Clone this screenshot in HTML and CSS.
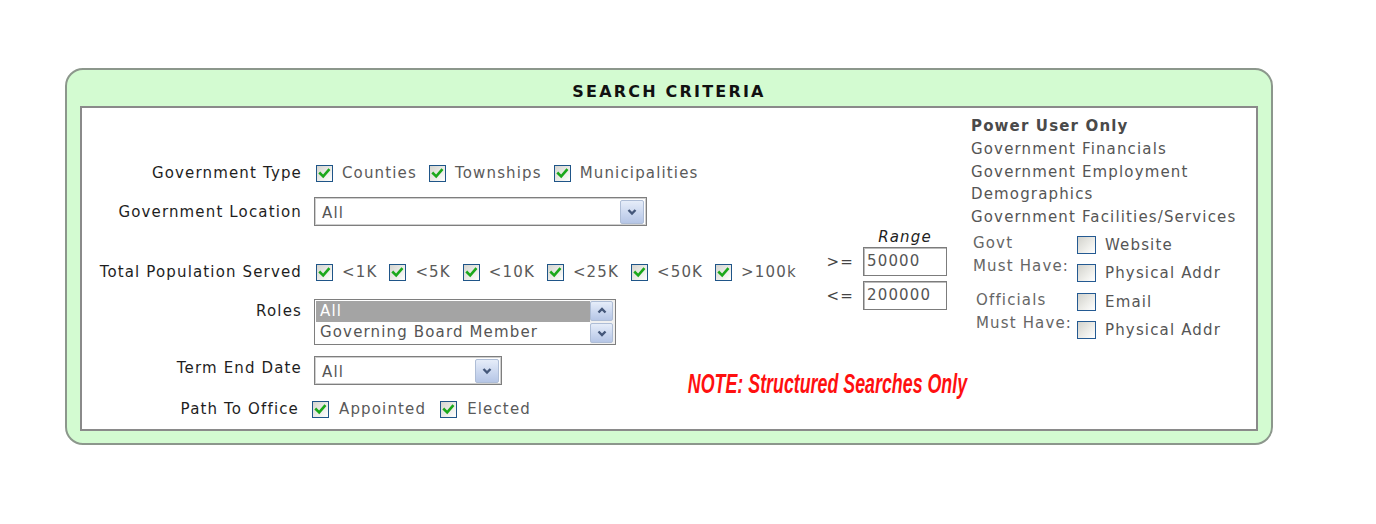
FILE: index.html
```html
<!DOCTYPE html>
<html>
<head>
<meta charset="utf-8">
<title>Search Criteria</title>
<link rel="stylesheet" href="styles.css">
</head>
<body>
<div class="panel">
  <div class="title">SEARCH CRITERIA</div>
  <div class="inner">
    <div class="main">
      <div class="form">
        <div class="row r1">
          <div class="lbl">Government Type</div>
          <div class="opts">
            <span class="opt"><span class="cb"><svg viewBox="0 0 15 15"><path d="M3.2 7.4 L6.2 10.4 L11.6 4.2"/></svg></span>Counties</span>
            <span class="opt"><span class="cb"><svg viewBox="0 0 15 15"><path d="M3.2 7.4 L6.2 10.4 L11.6 4.2"/></svg></span>Townships</span>
            <span class="opt"><span class="cb"><svg viewBox="0 0 15 15"><path d="M3.2 7.4 L6.2 10.4 L11.6 4.2"/></svg></span>Municipalities</span>
          </div>
        </div>
        <div class="row r2">
          <div class="lbl">Government Location</div>
          <div class="select wide"><span class="sel-text">All</span><span class="dd"><svg viewBox="0 0 12 12"><path d="M2.5 4 L6 7.5 L9.5 4"/></svg></span></div>
        </div>
        <div class="row r3">
          <div class="lbl">Total Population Served</div>
          <div class="opts pop">
            <span class="opt"><span class="cb"><svg viewBox="0 0 15 15"><path d="M3.2 7.4 L6.2 10.4 L11.6 4.2"/></svg></span>&lt;1K</span>
            <span class="opt"><span class="cb"><svg viewBox="0 0 15 15"><path d="M3.2 7.4 L6.2 10.4 L11.6 4.2"/></svg></span>&lt;5K</span>
            <span class="opt"><span class="cb"><svg viewBox="0 0 15 15"><path d="M3.2 7.4 L6.2 10.4 L11.6 4.2"/></svg></span>&lt;10K</span>
            <span class="opt"><span class="cb"><svg viewBox="0 0 15 15"><path d="M3.2 7.4 L6.2 10.4 L11.6 4.2"/></svg></span>&lt;25K</span>
            <span class="opt"><span class="cb"><svg viewBox="0 0 15 15"><path d="M3.2 7.4 L6.2 10.4 L11.6 4.2"/></svg></span>&lt;50K</span>
            <span class="opt"><span class="cb"><svg viewBox="0 0 15 15"><path d="M3.2 7.4 L6.2 10.4 L11.6 4.2"/></svg></span>&gt;100k</span>
          </div>
        </div>
        <div class="row r4">
          <div class="lbl">Roles</div>
          <div class="listbox">
            <div class="items">
              <div class="item selected">All</div>
              <div class="item">Governing Board Member</div>
            </div>
            <div class="sb">
              <span class="sbtn"><svg viewBox="0 0 12 12"><path d="M2.5 7.5 L6 4 L9.5 7.5"/></svg></span>
              <span class="sbtn"><svg viewBox="0 0 12 12"><path d="M2.5 4.5 L6 8 L9.5 4.5"/></svg></span>
            </div>
          </div>
        </div>
        <div class="row r5">
          <div class="lbl">Term End Date</div>
          <div class="select narrow"><span class="sel-text">All</span><span class="dd"><svg viewBox="0 0 12 12"><path d="M2.5 4 L6 7.5 L9.5 4"/></svg></span></div>
        </div>
        <div class="row r6">
          <div class="lbl">Path To Office</div>
          <div class="opts path">
            <span class="opt"><span class="cb"><svg viewBox="0 0 15 15"><path d="M3.2 7.4 L6.2 10.4 L11.6 4.2"/></svg></span>Appointed</span>
            <span class="opt"><span class="cb"><svg viewBox="0 0 15 15"><path d="M3.2 7.4 L6.2 10.4 L11.6 4.2"/></svg></span>Elected</span>
          </div>
        </div>
      </div>
      <div class="range">
        <div class="range-title">Range</div>
        <div class="range-row first"><span class="op">&gt;=</span><span class="num">50000</span></div>
        <div class="range-row"><span class="op">&lt;=</span><span class="num">200000</span></div>
      </div>
      <div class="note"><span class="note-text">NOTE: Structured Searches Only</span></div>
    </div>
    <div class="power">
      <div class="pline bold">Power User Only</div>
      <div class="pline">Government Financials</div>
      <div class="pline">Government Employment</div>
      <div class="pline">Demographics</div>
      <div class="pline">Government Facilities/Services</div>
      <div class="must g1">
        <div class="must-lbl">Govt<br>Must Have:</div>
        <div class="must-opts">
          <div class="mopt"><span class="ucb"></span>Website</div>
          <div class="mopt"><span class="ucb"></span>Physical Addr</div>
        </div>
      </div>
      <div class="must g2">
        <div class="must-lbl">Officials<br>Must Have:</div>
        <div class="must-opts">
          <div class="mopt"><span class="ucb"></span>Email</div>
          <div class="mopt"><span class="ucb"></span>Physical Addr</div>
        </div>
      </div>
    </div>
  </div>
</div>
</body>
</html>
```
FILE: styles.css
```css
html, body {
  margin: 0;
  padding: 0;
  background: #ffffff;
}
body {
  font-family: "DejaVu Sans", Verdana, sans-serif;
  font-size: 15px;
  letter-spacing: 1.15px;
  color: #222;
}
.panel {
  box-sizing: border-box;
  margin: 68px 0 0 65px;
  width: 1208px;
  height: 377px;
  border: 2px solid #8c978c;
  border-radius: 18px;
  background: #d3fbd1;
  padding: 0 13px 12px 13px;
  display: flex;
  flex-direction: column;
}
.title {
  box-sizing: border-box;
  height: 36px;
  padding-top: 7px;
  line-height: 30px;
  text-align: center;
  font-weight: bold;
  font-size: 16px;
  letter-spacing: 2.2px;
  color: #111;
}
.inner {
  box-sizing: border-box;
  height: 325px;
  border: 2px solid #8a8a8a;
  background: #fff;
  display: flex;
}
.main {
  display: grid;
  grid-template-columns: 738px 148px;
  grid-template-rows: 1fr;
}
.form {
  grid-column: 1;
  grid-row: 1;
  padding-top: 52px;
  display: flex;
  flex-direction: column;
}
.row {
  display: flex;
  align-items: center;
}
.lbl {
  flex: 0 0 220px;
  margin-right: 12px;
  text-align: right;
  white-space: nowrap;
  color: #1e1e1e;
}
.r1 { height: 26px; }
.r2 { height: 29px; margin-top: 11px; }
.r3 { height: 26px; margin-top: 33px; }
.r4 { align-items: flex-start; margin-top: 14px; }
.r4 .lbl { line-height: 22px; margin-top: 1px; }
.r5 { height: 29px; margin-top: 11px; }
.r5 .lbl { padding-bottom: 5px; }
.r6 { height: 26px; margin-top: 11px; }
.r6 .lbl { flex-basis: 217px; margin-right: 13px; }
.opts {
  display: flex;
  align-items: center;
  color: #5a5a5a;
}
.opt {
  display: flex;
  align-items: center;
  margin-right: 10px;
  white-space: nowrap;
}
.pop .opt { margin-right: 10px; }
.path .opt { margin-right: 14px; }
.cb {
  box-sizing: border-box;
  width: 17px;
  height: 17px;
  margin: 0 9px 0 2px;
  border: 1px solid #1f5588;
  background: linear-gradient(135deg, #d5d5cf 0%, #f2f2ef 70%, #ffffff 100%);
  display: flex;
  align-items: center;
  justify-content: center;
}
.path .cb { margin-left: 0; margin-right: 10px; }
.cb svg {
  width: 15px;
  height: 15px;
}
.cb path {
  fill: none;
  stroke: #1ba81b;
  stroke-width: 2.6;
  stroke-linecap: square;
}
.select {
  box-sizing: border-box;
  height: 29px;
  border: 1px solid #7e7e7e;
  box-shadow: inset 0 0 0 1px #cfcfcf;
  background: #fff;
  display: flex;
  align-items: center;
  justify-content: space-between;
  padding: 0 2px 0 7px;
  color: #555;
}
.select.wide { width: 333px; }
.select.narrow { width: 188px; }
.sel-text { padding-top: 2px; }
.dd, .sbtn {
  box-sizing: border-box;
  width: 24px;
  height: 24px;
  border: 1px solid #aebdd6;
  border-radius: 2px;
  background: linear-gradient(180deg, #e6edf9 0%, #c8d5ee 60%, #b6c6e6 100%);
  display: flex;
  align-items: center;
  justify-content: center;
}
.dd svg, .sbtn svg {
  width: 12px;
  height: 12px;
}
.dd path, .sbtn path {
  fill: none;
  stroke: #44577a;
  stroke-width: 2.4;
}
.listbox {
  box-sizing: border-box;
  width: 302px;
  height: 46px;
  border: 1px solid #7e7e7e;
  display: flex;
  background: #fff;
}
.items {
  flex: 1;
  padding: 1px 0 0 1px;
}
.item {
  height: 21px;
  line-height: 21px;
  padding-left: 4px;
  color: #555;
  white-space: nowrap;
}
.item.selected {
  background: #a4a4a4;
  color: #fff;
}
.sb {
  width: 24px;
  display: flex;
  flex-direction: column;
  justify-content: space-between;
  padding: 1px 1px 1px 0;
  background: #f0f0f0;
}
.sbtn {
  width: 23px;
  height: 20px;
}
.range {
  grid-column: 2;
  grid-row: 1;
  align-self: start;
  padding-top: 120px;
  padding-right: 21px;
  display: flex;
  flex-direction: column;
  align-items: flex-end;
}
.range-title {
  width: 84px;
  text-align: center;
  font-style: italic;
  line-height: 18px;
  color: #222;
}
.range-row {
  display: flex;
  align-items: center;
  margin-top: 5px;
}
.range-row.first { margin-top: 1px; }
.op {
  margin-right: 9px;
  color: #444;
}
.num {
  box-sizing: border-box;
  width: 84px;
  height: 29px;
  border: 1px solid #7c7c7c;
  box-shadow: inset 1px 1px 0 #bcbcbc;
  padding: 4px 0 0 3px;
  color: #555;
}
.note {
  grid-column: 1 / 3;
  grid-row: 1;
  align-self: end;
  justify-self: end;
  margin: 0 1px 30px 0;
}
.note-text {
  display: inline-block;
  font-family: "Liberation Sans", Arial, sans-serif;
  font-weight: bold;
  font-style: italic;
  font-size: 27px;
  letter-spacing: 0;
  line-height: 30px;
  color: #ff1010;
  white-space: nowrap;
  transform: scaleX(0.66);
  transform-origin: right center;
}
.power {
  padding: 7px 0 0 3px;
  color: #555;
}
.pline {
  line-height: 22.75px;
  white-space: nowrap;
}
.pline.bold {
  font-weight: bold;
  color: #4a4a4a;
}
.must {
  display: flex;
  margin-top: 3px;
}
.must.g2 { margin-top: 3px; }
.must-lbl {
  width: 104px;
  padding-left: 2px;
  line-height: 23px;
  color: #666;
}
.g2 .must-lbl {
  padding-left: 5px;
  width: 101px;
}
.must-opts {
  display: flex;
  flex-direction: column;
}
.mopt {
  height: 26px;
  display: flex;
  align-items: center;
  white-space: nowrap;
  color: #555;
}
.mopt + .mopt { padding-top: 2px; }
.ucb {
  box-sizing: border-box;
  width: 19px;
  height: 18px;
  margin-right: 9px;
  border: 1px solid #245a92;
  background: linear-gradient(135deg, #d2d2cc 0%, #eeeeea 60%, #ffffff 100%);
}
```
